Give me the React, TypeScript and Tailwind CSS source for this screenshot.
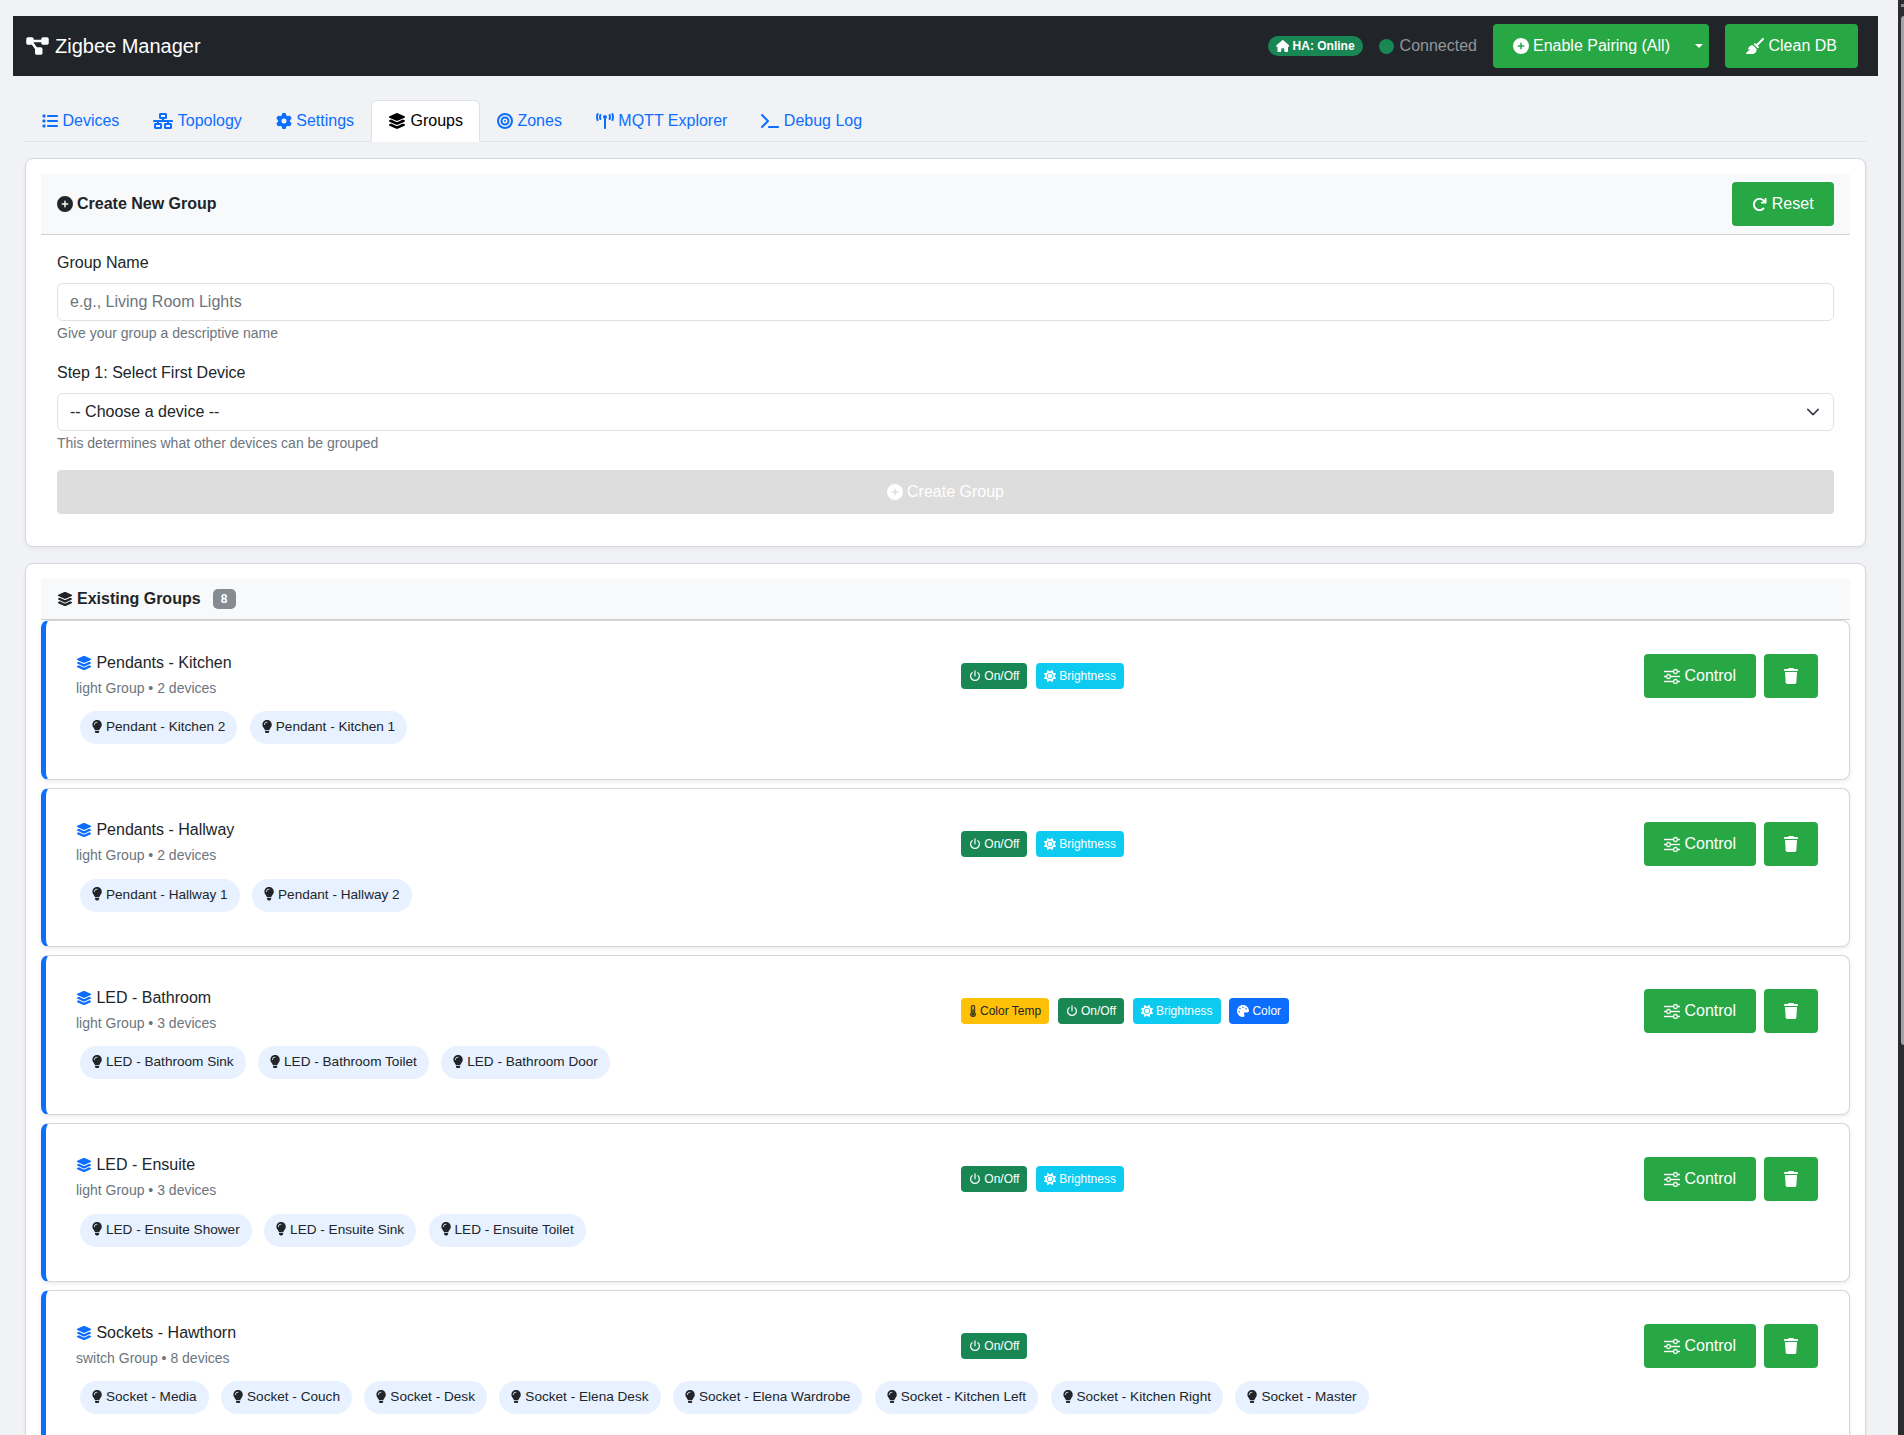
import React from "react";
import {
  FaDiagramProject, FaHouse, FaCirclePlus, FaBroom, FaList, FaNetworkWired, FaGear, FaLayerGroup, FaBullseye, FaTerminal,
  FaArrowRotateRight, FaTrash, FaLightbulb, FaSun, FaPalette, FaTowerBroadcast,
} from "react-icons/fa6";
import { BsSliders, BsThermometerHalf } from "react-icons/bs";

const tabs = [
  { name: "Devices", icon: <FaList className="w-4 h-4" /> },
  { name: "Topology", icon: <FaNetworkWired className="w-5 h-4" /> },
  { name: "Settings", icon: <FaGear className="w-4 h-4" /> },
  { name: "Groups", icon: <FaLayerGroup className="w-[18px] h-4" />, active: true },
  { name: "Zones", icon: <FaBullseye className="w-4 h-4" /> },
  { name: "MQTT Explorer", icon: <FaTowerBroadcast className="w-[18px] h-4" /> },
  { name: "Debug Log", icon: <FaTerminal className="w-[18px] h-4" /> },
];

type Cap = "temp" | "on" | "bright" | "color";
const groups: { name: string; sub: string; caps: Cap[]; devices: string[] }[] = [
  { name: "Pendants - Kitchen", sub: "light Group • 2 devices", caps: ["on", "bright"], devices: ["Pendant - Kitchen 2", "Pendant - Kitchen 1"] },
  { name: "Pendants - Hallway", sub: "light Group • 2 devices", caps: ["on", "bright"], devices: ["Pendant - Hallway 1", "Pendant - Hallway 2"] },
  { name: "LED - Bathroom", sub: "light Group • 3 devices", caps: ["temp", "on", "bright", "color"], devices: ["LED - Bathroom Sink", "LED - Bathroom Toilet", "LED - Bathroom Door"] },
  { name: "LED - Ensuite", sub: "light Group • 3 devices", caps: ["on", "bright"], devices: ["LED - Ensuite Shower", "LED - Ensuite Sink", "LED - Ensuite Toilet"] },
  { name: "Sockets - Hawthorn", sub: "switch Group • 8 devices", caps: ["on"], devices: ["Socket - Media", "Socket - Couch", "Socket - Desk", "Socket - Elena Desk", "Socket - Elena Wardrobe", "Socket - Kitchen Left", "Socket - Kitchen Right", "Socket - Master"] },
];

function PowerIcon() {
  return (
    <svg viewBox="0 0 12 12" className="w-3 h-3 mr-[3.3px]" fill="none" stroke="currentColor" strokeWidth="1.2" strokeLinecap="round">
      <path d="M6 0.8v5" />
      <path d="M3.2 2.6a4.4 4.4 0 1 0 5.6 0" />
    </svg>
  );
}

function CapBadge({ cap }: { cap: Cap }) {
  if (cap === "temp")
    return (
      <span className="flex items-center h-[26px] px-2 rounded-[4px] bg-[#ffc107] text-[#212529] text-[12px]">
        <BsThermometerHalf className="w-3 h-3 -mx-[2px] mr-[1px]" stroke="currentColor" strokeWidth={0.5} />Color Temp
      </span>
    );
  if (cap === "on")
    return (
      <span className="flex items-center h-[26px] px-2 rounded-[4px] bg-[#198754] text-white text-[12px]">
        <PowerIcon />On/Off
      </span>
    );
  if (cap === "bright")
    return (
      <span className="flex items-center h-[26px] px-2 rounded-[4px] bg-[#0dcaf0] text-white text-[12px]">
        <FaSun className="w-3 h-3 mr-[3.3px]" />Brightness
      </span>
    );
  return (
    <span className="flex items-center h-[26px] px-2 rounded-[4px] bg-[#0d6efd] text-white text-[12px]">
      <FaPalette className="w-3 h-3 mr-[3.3px]" />Color
    </span>
  );
}

function GreenButton({ children, className }: { children: React.ReactNode; className: string }) {
  return (
    <button className={"flex items-center justify-center h-11 rounded-[4px] bg-[#28a745] text-white text-[16px] " + className}>
      {children}
    </button>
  );
}

function GroupCard({ g }: { g: (typeof groups)[number] }) {
  return (
    <div className="h-[159.5px] mb-2 bg-white rounded-lg border border-[#d5d6d8] border-l-[5px] border-l-[#0d6efd] pl-[30px] pr-[31px] pt-[30px] shadow-[0_2px_4px_rgba(0,0,0,0.08)]">
      <div className="flex items-center h-[50px]">
        <div className="w-[885px] shrink-0 pb-[3px]">
          <div className="flex items-center h-6 text-[16px] text-[#212529]">
            <FaLayerGroup className="w-4 h-4 mr-[4.45px] text-[#0d6efd]" />
            {g.name}
          </div>
          <div className="h-[21px] mt-[3px] text-[14px] leading-[21px] text-[#6c757d]">{g.sub}</div>
        </div>
        <div className="flex flex-1 items-center gap-[8.5px]">
          {g.caps.map((c) => (
            <CapBadge key={c} cap={c} />
          ))}
        </div>
        <div className="flex gap-2">
          <GreenButton className="w-[112px]">
            <BsSliders className="w-4 h-4 mr-[4.45px]" stroke="currentColor" strokeWidth={0.4} />Control
          </GreenButton>
          <GreenButton className="w-[54px]">
            <FaTrash className="w-[14px] h-4" />
          </GreenButton>
        </div>
      </div>
      <div className="flex gap-[12.45px] pl-1 mt-[10px]">
        {g.devices.map((d) => (
          <span key={d} className="flex items-center h-[33px] px-3 rounded-full bg-[#e7f1ff] text-[13.6px] text-[#212529]">
            <FaLightbulb className="w-[10.2px] h-[13.6px] mr-[3.78px] -mt-[2px]" />
            {d}
          </span>
        ))}
      </div>
    </div>
  );
}

export default function App() {
  return (
    <div className="flex h-[1435px] overflow-hidden bg-[#f0f2f5] text-[16px] text-[#212529] font-['Liberation_Sans',Arial,sans-serif]">
      <div className="flex-1 min-w-0 pr-5 pt-4 pl-[13px]">
        <nav className="flex items-center h-[60px] bg-[#212529] pl-3 pr-5 text-white">
          <FaDiagramProject className="w-[25px] h-5 mr-[5px]" />
          <span className="text-[20px]">Zigbee Manager</span>
          <div className="ml-auto flex items-center">
            <span className="flex items-center h-5 px-2 rounded-full bg-[#198754] text-[12px] font-bold">
              <FaHouse className="w-[13.5px] h-3 mr-[3.3px]" />HA: Online
            </span>
            <span className="ml-4 w-[15px] h-[15px] rounded-full bg-[#198754]" />
            <span className="ml-[6px] text-[#939699]">Connected</span>
            <GreenButton className="ml-4 w-[216px] pl-5 pr-[6px] !justify-start">
              <FaCirclePlus className="w-4 h-4 mr-1" />Enable Pairing (All)
              <span className="ml-auto border-x-[4px] border-t-[4px] border-x-transparent border-t-white" />
            </GreenButton>
            <GreenButton className="ml-4 w-[133px]">
              <FaBroom className="w-[18px] h-4 mr-[4.45px]" />Clean DB
            </GreenButton>
          </div>
        </nav>

        <div className="px-3">
          <div className="flex h-[42px] mt-6 border-b border-[#dee2e6]">
            {tabs.map((t) =>
              t.active ? (
                <div key={t.name} className="flex items-center h-[42px] px-4 bg-white border border-[#dee2e6] border-b-white rounded-t-md text-[#000]">
                  <span className="mr-[4.45px]">{t.icon}</span>{t.name}
                </div>
              ) : (
                <div key={t.name} className="flex items-center h-[41px] px-[17px] text-[#0d6efd]">
                  <span className="mr-[4.45px]">{t.icon}</span>{t.name}
                </div>
              )
            )}
          </div>

          <section className="mt-4 h-[389px] bg-white rounded-lg border border-[#d5d6d8] p-[15px] shadow-[0_2px_4px_rgba(0,0,0,0.05)]">
            <div className="flex items-center justify-between h-[61px] bg-[#f8f9fa] border-b border-[#cfd0d2] pl-4 pr-4">
              <div className="flex items-center font-bold">
                <FaCirclePlus className="w-4 h-4 mr-1" />Create New Group
              </div>
              <GreenButton className="w-[102px]">
                <FaArrowRotateRight className="w-[15px] h-[15px] mr-[4.45px]" />Reset
              </GreenButton>
            </div>
            <div className="px-4 pt-4">
              <div className="h-6">Group Name</div>
              <input
                placeholder="e.g., Living Room Lights"
                className="mt-2 block w-full h-[38px] px-3 rounded-md border border-[#dee2e6] bg-white placeholder:text-[#6c757d] outline-none"
              />
              <div className="mt-[2px] text-[14px] leading-[21px] text-[#6c757d]">Give your group a descriptive name</div>
              <div className="mt-[17px] h-6">Step 1: Select First Device</div>
              <div className="mt-2 flex items-center justify-between h-[38px] px-3 rounded-md border border-[#dee2e6] bg-white">
                <span>-- Choose a device --</span>
                <svg viewBox="0 0 16 16" className="w-[14px] h-[14px] mr-[1px]" fill="none" stroke="#343a40" strokeWidth="1.7" strokeLinecap="round" strokeLinejoin="round">
                  <path d="m2 5 6 6 6-6" />
                </svg>
              </div>
              <div className="mt-[2px] text-[14px] leading-[21px] text-[#6c757d]">This determines what other devices can be grouped</div>
              <div className="mt-4 flex items-center justify-center h-11 rounded-[4px] bg-[#dddddd] text-white">
                <FaCirclePlus className="w-4 h-4 mr-1" />Create Group
              </div>
            </div>
          </section>

          <section className="mt-4 bg-white rounded-lg border border-[#d5d6d8] p-[15px] shadow-[0_2px_4px_rgba(0,0,0,0.05)]">
            <div className="flex items-center h-[41px] bg-[#f8f9fa] border-b border-[#cfd0d2] pl-4">
              <FaLayerGroup className="w-4 h-4 mr-1" />
              <span className="font-bold">Existing Groups</span>
              <span className="ml-3 flex items-center justify-center w-[23px] h-5 rounded-[5px] bg-[#868b91] text-white text-[12px] font-bold">8</span>
            </div>
            {groups.map((g) => (
              <GroupCard key={g.name} g={g} />
            ))}
          </section>
        </div>
      </div>
      <aside className="relative w-[6px] shrink-0 bg-[#2c2c2c]">
        <div className="absolute top-[4px] right-0 w-[3px] h-[3px] bg-[#8a8a8a]" />
        <div className="absolute top-[16px] right-0 w-[3px] h-[1029px] rounded-l-sm bg-[#a3a3a3]" />
      </aside>
    </div>
  );
}
